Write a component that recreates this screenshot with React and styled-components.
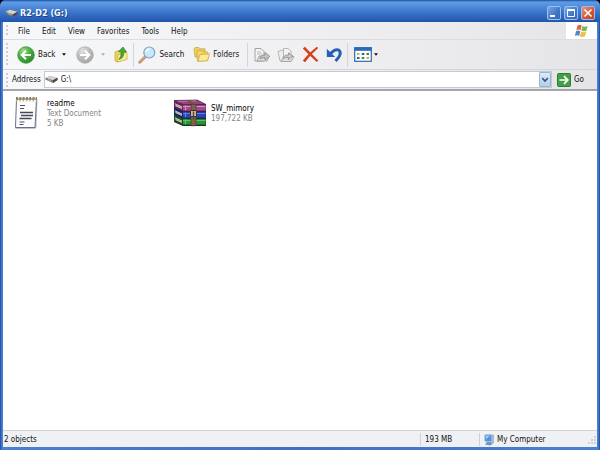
import styled, { createGlobalStyle } from "styled-components";

const GlobalStyle = createGlobalStyle`
  * {
    box-sizing: border-box;
  }
  body {
    margin: 0;
    background: #050a1c;
  }
  button, input {
    font: inherit;
    color: inherit;
    border: 0;
    padding: 0;
    background: none;
  }
  svg {
    display: block;
    flex-shrink: 0;
  }
`;

const Window = styled.div`
  display: flex;
  flex-direction: column;
  min-height: 100vh;
  padding: 0 3px 3px;
  overflow: hidden;
  border-radius: 6px 6px 0 0;
  background: linear-gradient(90deg, #1c4a9c, #4a80d4 2px, #3f70c4 50%, #4a80d4 calc(100% - 2px), #1c4a9c);
  font-family: "DejaVu Sans Condensed", "DejaVu Sans", sans-serif;
  font-size: 8px;
  line-height: 10px;
  color: #111;
`;

const TitleBar = styled.header`
  display: flex;
  align-items: center;
  height: 22px;
  margin: 0 -3px;
  padding: 4px 5px 0;
  background: linear-gradient(#1b4f9f 0, #5e9ce4 2px, #5692de 5px, #3f79cd 11px, #2c62ba 18px, #2254a8 22px);
`;

const Title = styled.h1`
  flex: 1;
  margin: 0 0 0 2px;
  font-size: 9px;
  line-height: 12px;
  font-weight: bold;
  color: #f2f6ff;
  text-shadow: 1px 1px #1b4488;
`;

const WindowButtons = styled.div`
  display: flex;
  gap: 3px;
`;

const WindowButton = styled.button`
  width: 14px;
  height: 14px;
  border: 1px solid #9dbdec;
  border-radius: 2px;
  background: ${(props) =>
    props.$close
      ? "linear-gradient(135deg, #e79a80, #d5512c 60%, #c14520)"
      : "linear-gradient(135deg, #78a8e8, #3e76c8 60%, #3268b8)"};
`;

const Bars = styled.div`
  background: linear-gradient(90deg, #f7f8fa, #eeeef1 60%, #e5e5e8);
`;

const MenuBar = styled.nav`
  display: flex;
  align-items: stretch;
  height: 18px;
  border-bottom: 1px solid #dcdce0;
`;

const Grip = styled.span`
  align-self: center;
  width: 2px;
  height: ${(props) => props.$height}px;
  margin: 0 4px 0 3px;
  background: repeating-linear-gradient(#dcc3d6 0 2px, transparent 2px 4px);
`;

const MenuItem = styled.button`
  padding: 2px 6px 0;
  white-space: nowrap;
`;

const Flag = styled.div`
  display: flex;
  align-items: center;
  justify-content: center;
  width: 31px;
  margin-left: auto;
  background: #fff;
`;

const ToolBar = styled.div`
  display: flex;
  align-items: center;
  height: 30px;
  border-bottom: 1px solid #d6d6da;
`;

const ToolButton = styled.button`
  display: flex;
  align-items: center;
  gap: 3px;
  height: 24px;
  margin-left: ${(props) => props.$gap || 0}px;
  white-space: nowrap;
`;

const Separator = styled.span`
  width: 1px;
  height: 24px;
  margin: 0 4px 0 ${(props) => props.$gap || 4}px;
  background: #d4d4da;
`;

const AddressBar = styled.form`
  display: flex;
  align-items: center;
  height: 19px;
`;

const AddressLabel = styled.label`
  margin-right: 3px;
`;

const AddressBox = styled.div`
  display: flex;
  flex: 1;
  align-items: center;
  height: 17px;
  border: 1px solid #c2cad6;
  background: #fff;
`;

const AddressInput = styled.input`
  flex: 1;
  min-width: 0;
  margin-left: 3px;
  outline: none;
`;

const DropButton = styled.button`
  display: flex;
  align-items: center;
  justify-content: center;
  width: 12px;
  height: 15px;
  border: 1px solid #98b4d0;
  border-radius: 1px;
  background: linear-gradient(#dcebf8, #b4cfe8);
`;

const GoButton = styled.button`
  display: flex;
  align-items: center;
  gap: 3px;
  width: 45px;
  padding-left: 5px;
`;

const Files = styled.main`
  display: flex;
  flex: 1;
  align-items: flex-start;
  padding: 5px 8px;
  border-top: 2px solid #a4a6aa;
  background: #fff;
`;

const File = styled.article`
  display: flex;
  align-items: center;
  gap: 4px;
  width: 162px;
  height: 34px;
`;

const FileText = styled.div`
  padding-top: 1px;
`;

const FileName = styled.h2`
  margin: 0;
  font-size: 8px;
  line-height: 10px;
  font-weight: normal;
  color: #000;
`;

const FileInfo = styled.p`
  margin: 0;
  color: #858585;
`;

const StatusBar = styled.footer`
  display: flex;
  align-items: center;
  height: 17px;
  padding-top: 1px;
  border-top: 1px solid #d2d2d6;
  background: #f0f1f4;
`;

const StatusCell = styled.div`
  display: flex;
  align-items: center;
  gap: 3px;
  flex: ${(props) => (props.$width ? `0 0 ${props.$width}px` : 1)};
  height: 13px;
  padding-left: ${(props) => (props.$width ? 4 : 1)}px;
  border-left: ${(props) => (props.$width ? "1px solid #d0d0d6" : 0)};
`;

const DriveIcon = () => (
  <svg width="13" height="9" viewBox="0 0 13 9">
    <path d="M0.5 3 L5 1 L12.5 3 L12.5 5 L8 8 L0.5 4.5Z" fill="#777" />
    <path d="M0.5 2.8 L5 0.8 L12.5 2.8 L8 5.2Z" fill="#d3d3d1" />
    <path d="M8 5.2 L12.5 2.8 L12.5 5 L8 8Z" fill="#484848" />
    <path d="M3 4.5 L6 5.6" stroke="#bbb" strokeWidth="0.8" />
  </svg>
);

const MinimizeIcon = () => (
  <svg width="12" height="12" viewBox="0 0 12 12">
    <path d="M2 9h5" stroke="#fff" strokeWidth="2" />
  </svg>
);

const MaximizeIcon = () => (
  <svg width="12" height="12" viewBox="0 0 12 12">
    <path d="M2.5 3v6.5h7V3" fill="none" stroke="#fff" />
    <path d="M2 3h8" stroke="#fff" strokeWidth="2" />
  </svg>
);

const CloseIcon = () => (
  <svg width="12" height="12" viewBox="0 0 12 12">
    <path d="M2.5 2.5l7 7M9.5 2.5l-7 7" stroke="#fff" strokeWidth="1.6" />
  </svg>
);

const FlagIcon = () => (
  <svg width="15" height="14" viewBox="0 0 14 14">
    <path d="M3 1.5 Q5 0.2 7.2 1.6 L6 6.3 Q4 5 1.8 6.2Z" fill="#e0653c" />
    <path d="M8 2 Q10.5 3.3 13.2 1.9 L12 6.6 Q9.5 8 6.9 6.6Z" fill="#7db84c" />
    <path d="M1.5 7.2 Q3.6 5.9 5.8 7.2 L4.6 12 Q2.5 10.7 0.3 12Z" fill="#4f86d2" />
    <path d="M6.6 7.6 Q9 8.9 11.7 7.6 L10.5 12.3 Q8 13.6 5.4 12.4Z" fill="#f0c040" />
  </svg>
);

const RoundArrow = ({ disabled }) => {
  const id = disabled ? "forwardFill" : "backFill";
  return (
    <svg width="18" height="18" viewBox="0 0 18 18">
      <defs>
        <radialGradient id={id} cx="35%" cy="25%" r="80%">
          <stop offset="0" stopColor={disabled ? "#e2e2e2" : "#a0dc8c"} />
          <stop offset="0.5" stopColor={disabled ? "#bcbcbc" : "#48ae3a"} />
          <stop offset="1" stopColor={disabled ? "#a4a4a4" : "#28882a"} />
        </radialGradient>
      </defs>
      <circle cx="9" cy="9" r="8.3" fill={`url(#${id})`} stroke={disabled ? "#aaa" : "#388c30"} strokeWidth="0.7" />
      <path
        d={disabled ? "M4 9h9M9 4.7l4.3 4.3L9 13.3" : "M14 9H5M9 4.7L4.7 9L9 13.3"}
        fill="none"
        stroke="#fff"
        strokeWidth="2"
      />
    </svg>
  );
};

const Caret = ({ color = "#111" }) => (
  <svg width="4" height="3" viewBox="0 0 4 3">
    <path d="M0 0.3h4L2 2.7Z" fill={color} />
  </svg>
);

const UpIcon = () => (
  <svg width="15" height="17" viewBox="0 0 15 17">
    <path d="M1 6l4-1.5 1 1.3 5-1 2 8L3.5 16 1 15Z" fill="#edd25c" stroke="#c6a434" strokeWidth="0.7" />
    <path d="M3.5 16L4 8.5l9-2v7Z" fill="#faeb94" stroke="#c6a434" strokeWidth="0.6" />
    <path d="M5 13.5Q10.3 12 9.5 6H12.5L9 1L4.5 5.5L7.1 5.6Q7.5 10.5 5 13.5Z" fill="#48a838" stroke="#267820" strokeWidth="0.6" />
  </svg>
);

const SearchIcon = () => (
  <svg width="18" height="18" viewBox="0 0 18 18">
    <path d="M7 11L1.7 16.3" stroke="#c58a68" strokeWidth="2.8" strokeLinecap="round" />
    <path d="M7 10.5L2 15.5" stroke="#e8b895" strokeWidth="1" strokeLinecap="round" />
    <circle cx="11.3" cy="6.5" r="5.5" fill="#c5e9f8" stroke="#7fa3c0" strokeWidth="1.2" />
    <path d="M8 6Q8.5 3.4 11.5 3" fill="none" stroke="#fff" strokeWidth="1.5" />
  </svg>
);

const FoldersIcon = () => (
  <svg width="17" height="17" viewBox="0 0 17 17">
    <path d="M1 3l1-1.5h4l1 1.3h5V11H2Z" fill="#edd065" stroke="#c7a236" strokeWidth="0.7" />
    <path d="M4.5 15L3.8 6l1-1.5h4l1 1.3 5 .2v8.5Z" fill="#f0d66c" stroke="#c7a236" strokeWidth="0.7" />
    <path d="M4.8 15.4L7 8.5l9.5-.6-2 6.8Z" fill="#fcea92" stroke="#c7a236" strokeWidth="0.7" />
  </svg>
);

const MoveToIcon = () => (
  <svg width="17" height="16" viewBox="0 0 17 16">
    <path d="M1 1.5h6l3 3V14H1Z" fill="#f2f2f2" stroke="#a2a2a2" />
    <path d="M3 5h4M3 7h5" stroke="#bbb" />
    <path d="M3 14l2-5h10l-2 5Z" fill="#dedede" stroke="#999" strokeWidth="0.8" />
    <path d="M6 12Q6 8 11 8V5.5L15.8 9.3 11 13v-2.3Q8 10.5 6 12Z" fill="#c4c4c4" stroke="#888" strokeWidth="0.8" />
  </svg>
);

const CopyToIcon = () => (
  <svg width="18" height="16" viewBox="0 0 18 16">
    <path d="M1 4.5L6 3l3 2v8L3 14Z" fill="#eee" stroke="#a8a8a8" strokeWidth="0.8" />
    <path d="M6.5 1.5h4.5l3 2.5v8H6.5Z" fill="#f4f4f4" stroke="#a8a8a8" strokeWidth="0.8" />
    <path d="M4 14.5l3-5h10l-3 5Z" fill="#ddd" stroke="#999" strokeWidth="0.8" />
    <path d="M6 11.5Q7 7.5 11.5 8V5.8L16 9l-4.5 3.5v-2Q8.5 9.8 6 11.5Z" fill="#cacaca" stroke="#8c8c8c" strokeWidth="0.8" />
  </svg>
);

const DeleteIcon = () => (
  <svg width="17" height="17" viewBox="0 0 17 17">
    <path d="M0.8 2.4L2.9 0.8Q8 6.4 16.3 14.4L14.8 16Q7.3 9.2 0.8 2.4Z" fill="#d4401c" />
    <path d="M14.8 0.8L16.2 2.1Q8.9 8.4 3 16.2L0.8 14.6Q7.1 6.5 14.8 0.8Z" fill="#d4401c" />
  </svg>
);

const UndoIcon = () => (
  <svg width="17" height="16" viewBox="0 0 17 16">
    <path d="M4.5 6.5Q9.5 1.2 13 3.2Q16.6 7 9.5 14" fill="none" stroke="#2460b4" strokeWidth="3" />
    <path d="M0.8 1.8V10H9.2Z" fill="#2460b4" />
  </svg>
);

const ViewsIcon = () => (
  <svg width="18" height="15" viewBox="0 0 18 15">
    <rect x="0.7" y="0.7" width="16.6" height="13.6" fill="#fff" stroke="#286bb4" strokeWidth="1.2" />
    <rect x="0.5" y="0.5" width="17" height="3.3" fill="#286bb4" />
    <path d="M3 6h2.5v2H3Z M12.5 10H15v2h-2.5Z" fill="#d9aa3c" />
    <path d="M7.8 6h2.5v2H7.8Z M3 10h2.5v2H3Z" fill="#34608f" />
    <path d="M12.5 6H15v2h-2.5Z M7.8 10h2.5v2H7.8Z" fill="#3f8442" />
  </svg>
);

const ChevronIcon = () => (
  <svg width="8" height="6" viewBox="0 0 8 6">
    <path d="M1.2 1.2L4 4l2.8-2.8" fill="none" stroke="#3c5678" strokeWidth="1.7" />
  </svg>
);

const GoIcon = () => (
  <svg width="14" height="14" viewBox="0 0 14 14">
    <rect x="0.5" y="0.5" width="13" height="13" rx="1" fill="#42a047" stroke="#2c7c34" />
    <path d="M2.5 7h8M7 3.2L10.8 7 7 10.8" fill="none" stroke="#fff" strokeWidth="1.7" />
  </svg>
);

const TextFileIcon = () => (
  <svg width="32" height="34" viewBox="0 0 32 34">
    <path d="M6 3H26.5L25.5 31.5L24 33H4.5Z" fill="#c2c4ce" />
    <path d="M5.5 3H25.5L24 31.5H4.5Z" fill="#fdfdfd" stroke="#69718c" strokeWidth="1" />
    <path d="M5 2.5H26" stroke="#8e8560" strokeWidth="3" strokeDasharray="2 1.3" />
    <path d="M5 4.8H26" stroke="#c9b775" strokeWidth="1.6" strokeDasharray="1.5 1.8" />
    <path d="M9 9.5h5M9 12.5h4M8.5 26h5M8.5 28.5h4" stroke="#515466" strokeWidth="1.2" />
    <path d="M9 16.5h13M10 19.5h12M8.5 22.5h12" stroke="#454859" strokeWidth="1.3" />
  </svg>
);

const books = [
  { cover: "#a8488c", light: "#d98cc6", dark: "#6b2856" },
  { cover: "#2c44b4", light: "#6480e0", dark: "#172468" },
  { cover: "#2a9238", light: "#5cc65c", dark: "#125019" },
];

const ArchiveIcon = () => (
  <svg width="34" height="28" viewBox="0 0 34 28">
    <path d="M1 1.5L24 1L33 5.5V27H10L1 23Z" fill="#2a1630" />
    {books.map(({ cover, light, dark }, i) => (
      <g key={cover} transform={`translate(0 ${i * 7})`}>
        <path d="M1 1.5L10 5.5H33V12.5H10L1 8.5Z" fill={dark} />
        <path d="M1.8 4.2L9 7.4V10L2.8 7.2Z" fill="#d9cfd2" />
        <path d="M2 5.5L9 8.7" stroke="#8c7c84" strokeWidth="0.6" />
        <path d="M10 6.3H32.5V11.5H10Z" fill={cover} />
        <path d="M10 7.5H32.5" stroke={light} strokeWidth="1.2" />
        <path d="M12.5 6.5v4.8" stroke={light} strokeWidth="1.2" />
      </g>
    ))}
    <path d="M1 1.5L24 1L33 5.5H10Z" fill="#94457f" stroke="#5a2049" strokeWidth="0.7" />
    <path d="M5 2.4L23 2" stroke="#c98abb" strokeWidth="0.8" />
    <path d="M13 1.4L17 1.2L23 5.3H18Z" fill="#735743" />
    <path d="M18 5.3h5v21.5h-5Z" fill="#806048" stroke="#41332b" strokeWidth="0.6" />
    <rect x="17.5" y="11.5" width="6" height="6" rx="1" fill="#c8b99b" stroke="#332c27" />
    <path d="M20.5 12.5v8" stroke="#51463c" strokeWidth="1.3" />
  </svg>
);

const ComputerIcon = () => (
  <svg width="10" height="12" viewBox="0 0 10 12">
    <path d="M6.5 1h3v8l-3 1Z" fill="#aebbd1" stroke="#8191ad" strokeWidth="0.5" />
    <rect x="0.8" y="0.8" width="7" height="6.7" rx="0.8" fill="#4f93e6" stroke="#a9bdd8" strokeWidth="0.9" />
    <path d="M1.8 1.8h4L2 5Z" fill="#a0d0fa" />
    <path d="M3 8h3.5l2 2-2.5 1.5L1 10.5Z" fill="#7494be" />
  </svg>
);

const ResizeIcon = () => (
  <svg width="10" height="10" viewBox="0 0 10 10">
    <path d="M7 1h2v2H7ZM7 4h2v2H7ZM7 7h2v2H7ZM4 4h2v2H4ZM4 7h2v2H4ZM1 7h2v2H1Z" fill="#d0d1d8" />
  </svg>
);

const menuItems = ["File", "Edit", "View", "Favorites", "Tools", "Help"];

const files = [
  { name: "readme", info: ["Text Document", "5 KB"], Icon: TextFileIcon },
  { name: "SW_mimory", info: ["197,722 KB"], Icon: ArchiveIcon },
];

const App = () => {
  return (
    <>
      <GlobalStyle />
      <Window>
        <TitleBar>
          <DriveIcon />
          <Title>R2-D2 (G:)</Title>
          <WindowButtons>
            <WindowButton aria-label="Minimize"><MinimizeIcon /></WindowButton>
            <WindowButton aria-label="Maximize"><MaximizeIcon /></WindowButton>
            <WindowButton $close aria-label="Close"><CloseIcon /></WindowButton>
          </WindowButtons>
        </TitleBar>
        <Bars>
          <MenuBar>
            <Grip $height={12} />
            {menuItems.map((item) => (
              <MenuItem key={item}>{item}</MenuItem>
            ))}
            <Flag><FlagIcon /></Flag>
          </MenuBar>
          <ToolBar>
            <Grip $height={24} />
            <ToolButton $gap={5}><RoundArrow />Back</ToolButton>
            <ToolButton $gap={7} aria-label="Back history"><Caret /></ToolButton>
            <ToolButton $gap={10} aria-label="Forward" disabled><RoundArrow disabled /></ToolButton>
            <ToolButton $gap={7} aria-label="Forward history" disabled><Caret color="#aaa" /></ToolButton>
            <ToolButton $gap={9} aria-label="Up"><UpIcon /></ToolButton>
            <Separator />
            <ToolButton><SearchIcon />Search</ToolButton>
            <ToolButton $gap={9}><FoldersIcon />Folders</ToolButton>
            <Separator $gap={8} />
            <ToolButton $gap={2} aria-label="Move to" disabled><MoveToIcon /></ToolButton>
            <ToolButton $gap={6} aria-label="Copy to" disabled><CopyToIcon /></ToolButton>
            <ToolButton $gap={7} aria-label="Delete"><DeleteIcon /></ToolButton>
            <ToolButton $gap={7} aria-label="Undo"><UndoIcon /></ToolButton>
            <Separator />
            <ToolButton $gap={2} aria-label="Views"><ViewsIcon /></ToolButton>
            <ToolButton $gap={2} aria-label="Choose view"><Caret /></ToolButton>
          </ToolBar>
          <AddressBar onSubmit={(e) => e.preventDefault()}>
            <Grip $height={14} />
            <AddressLabel htmlFor="address">Address</AddressLabel>
            <AddressBox>
              <DriveIcon />
              <AddressInput id="address" defaultValue="G:\" />
              <DropButton type="button" aria-label="Show addresses"><ChevronIcon /></DropButton>
            </AddressBox>
            <GoButton type="submit"><GoIcon />Go</GoButton>
          </AddressBar>
        </Bars>
        <Files>
          {files.map(({ name, info, Icon }) => (
            <File key={name}>
              <Icon />
              <FileText>
                <FileName>{name}</FileName>
                {info.map((line) => (
                  <FileInfo key={line}>{line}</FileInfo>
                ))}
              </FileText>
            </File>
          ))}
        </Files>
        <StatusBar>
          <StatusCell>2 objects</StatusCell>
          <StatusCell $width={59}>193 MB</StatusCell>
          <StatusCell $width={108}><ComputerIcon />My Computer</StatusCell>
          <ResizeIcon />
        </StatusBar>
      </Window>
    </>
  );
};

export default App;
